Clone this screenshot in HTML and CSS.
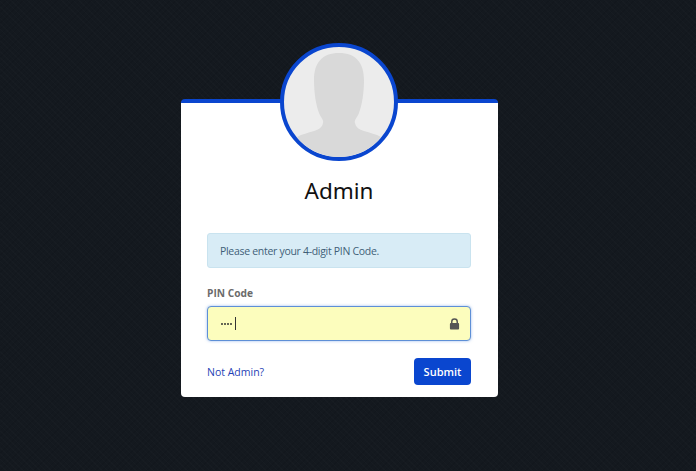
FILE: index.html
```html
<!DOCTYPE html>
<html lang="en">
<head>
    <meta charset="utf-8">
    <title>Admin</title>
    <link rel="stylesheet" href="styles.css">
</head>
<body>
    <div class="card">
        <div class="avatar">
            <svg viewBox="0 0 110 110" width="110" height="110">
                <path class="figure" d="M55 6C38 6 30 16 30 33C30 46 32 58 35 66C37 71 40 73 39 76C38 80 36 82 30 84C24 86 18 87 13 90L5 110H105L97 90C92 87 86 86 80 84C74 82 72 80 71 76C70 73 73 71 75 66C78 58 80 46 80 33C80 16 72 6 55 6Z"/>
            </svg>
        </div>
        <h1 class="name">Admin</h1>
        <div class="alert">Please enter your 4-digit PIN Code.</div>
        <label class="label" for="pin">PIN Code</label>
        <div class="field">
            <span class="dot"></span><span class="dot"></span><span class="dot"></span><span class="dot"></span><span class="caret"></span>
            <svg class="lock" viewBox="0 0 12 13" width="11" height="12">
                <path d="M3 6V4a3 3 0 0 1 6 0v2" fill="none" stroke="#555" stroke-width="1.6"/>
                <rect x="1" y="5.5" width="10" height="7" rx="1" fill="#555"/>
            </svg>
        </div>
        <div class="actions">
            <a class="link" href="#">Not Admin?</a>
            <button class="submit">Submit</button>
        </div>
    </div>
</body>
</html>
```

FILE: styles.css
```css
* {
    box-sizing: border-box;
}
html, body {
    height: 100%;
}
body {
    margin: 0;
    padding-top: 99px;
    display: flex;
    justify-content: center;
    overflow: hidden;
    font-family: "Open Sans", "Liberation Sans", sans-serif;
    background-color: #14191f;
    background-image:
        repeating-linear-gradient(45deg, rgba(255, 255, 255, 0.012) 0 1px, transparent 1px 4px),
        repeating-linear-gradient(-45deg, rgba(0, 0, 0, 0.08) 0 1px, transparent 1px 4px);
}
.card {
    position: relative;
    width: 317px;
    height: 298px;
    margin-right: 17px;
    padding: 71px 27px 0 26px;
    background: #fff;
    border-top: 4px solid #0a46cf;
    border-radius: 4px;
}
.avatar {
    position: absolute;
    top: -60px;
    left: 99px;
    width: 118px;
    height: 118px;
    overflow: hidden;
    background: #ececec;
    border: 4px solid #0a46cf;
    border-radius: 50%;
}
.avatar svg {
    display: block;
}
.figure {
    fill: #d9d9d9;
}
.name {
    margin: 0 0 25px;
    height: 34px;
    font-family: "Noto Sans", sans-serif;
    font-size: 22.5px;
    line-height: 34px;
    font-weight: 400;
    text-align: center;
    color: #111;
}
.alert {
    height: 35px;
    padding: 0 12px;
    font-size: 10.5px;
    font-weight: 500;
    letter-spacing: -0.3px;
    line-height: 35px;
    color: #3f5f78;
    background: #d8ecf6;
    border: 1px solid #c9e3ef;
    border-radius: 3px;
}
.label {
    display: block;
    margin-top: 18px;
    height: 15px;
    font-size: 10.2px;
    font-weight: 700;
    line-height: 15px;
    color: #6b6b6b;
}
.field {
    display: flex;
    align-items: center;
    height: 35px;
    margin-top: 5px;
    padding: 0 10px 0 13px;
    background: #fcfdbd;
    border: 1px solid #5e8fd6;
    border-radius: 4px;
    box-shadow: 0 0 3px rgba(70, 130, 220, 0.55);
}
.dot {
    width: 2px;
    height: 2px;
    margin-right: 1px;
    background: #333;
    border-radius: 50%;
}
.caret {
    width: 1px;
    height: 13px;
    margin-left: 2px;
    background: #333;
}
.lock {
    margin-left: auto;
}
.actions {
    display: flex;
    align-items: center;
    justify-content: space-between;
    margin-top: 17px;
}
.link {
    font-size: 10.5px;
    color: #1f3fb5;
    text-decoration: none;
}
.submit {
    width: 57px;
    height: 27px;
    padding: 0;
    font-family: inherit;
    font-size: 11px;
    font-weight: 600;
    color: #fff;
    background: #0a46cf;
    border: 0;
    border-radius: 4px;
}
```
